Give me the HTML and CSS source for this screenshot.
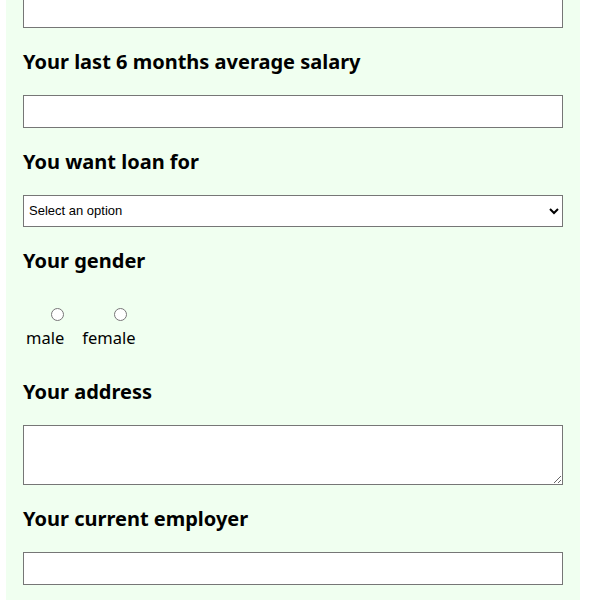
FILE: index.html
```html
<!DOCTYPE html>
<html lang="en">
<head>
    <meta charset="UTF-8">
    <meta name="viewport" content="width=device-width, initial-scale=1.0">
    <title>Loan Application</title>
    <link rel="stylesheet" href="styles.css">
</head>
<body>
    <div class="form-panel">
        <form id="loanForm">
            <input type="text" id="phone" name="phone" class="field">

            <label for="salary" class="field-label">Your last 6 months average salary</label>
            <input type="text" id="salary" name="salary" class="field">

            <label for="purpose" class="field-label">You want loan for</label>
            <select id="purpose" name="purpose" class="field field-select">
                <option value="">Select an option</option>
                <option value="home">Home</option>
                <option value="car">Car</option>
                <option value="education">Education</option>
            </select>

            <div class="field-label">Your gender</div>
            <div class="radio-group">
                <label class="radio-item">
                    <input type="radio" name="gender" value="male">
                    <span>male</span>
                </label>
                <label class="radio-item">
                    <input type="radio" name="gender" value="female">
                    <span>female</span>
                </label>
            </div>

            <label for="address" class="field-label">Your address</label>
            <textarea id="address" name="address" class="field field-area"></textarea>

            <label for="employer" class="field-label">Your current employer</label>
            <input type="text" id="employer" name="employer" class="field">
        </form>
    </div>
</body>
</html>
```

FILE: styles.css
```css
body {
    margin: 0;
    padding: 0;
    background-color: #ffffff;
    font-family: "Noto Sans", sans-serif;
}

.form-panel {
    width: 540px;
    margin: -5px 0 0 6px; /* la pagina esta desplazada, el primer campo queda cortado */
    padding: 0 17px 40px;
    background-color: #f0fff0;
}

.field-label {
    display: block;
    font-size: 20px;
    font-weight: bold;
    line-height: 28px;
    color: #000;
    margin-bottom: 19px;
}

.field {
    display: block;
    width: 100%;
    height: 33px;
    margin: 0 0 20px;
    padding: 1px 4px;
    border: 1px solid #767676;
    border-radius: 0;
    box-sizing: border-box;
    background-color: #fff;
    font-family: "Liberation Sans", Arial, sans-serif;
    font-size: 13px;
}

.field-select {
    height: 32px;
    padding: 0 2px 1px 1px;
}

.field-area {
    height: 60px;
    resize: vertical;
}

.radio-group {
    display: flex;
    gap: 18px;
    padding: 14px 0 0 3px;
    margin-bottom: 29px;
}

.radio-item {
    display: flex;
    flex-direction: column;
    align-items: center;
    font-size: 16.5px;
    line-height: 22px;
}

.radio-item input {
    width: 13px;
    height: 13px;
    margin: 0 0 6px 24px;
}
```
